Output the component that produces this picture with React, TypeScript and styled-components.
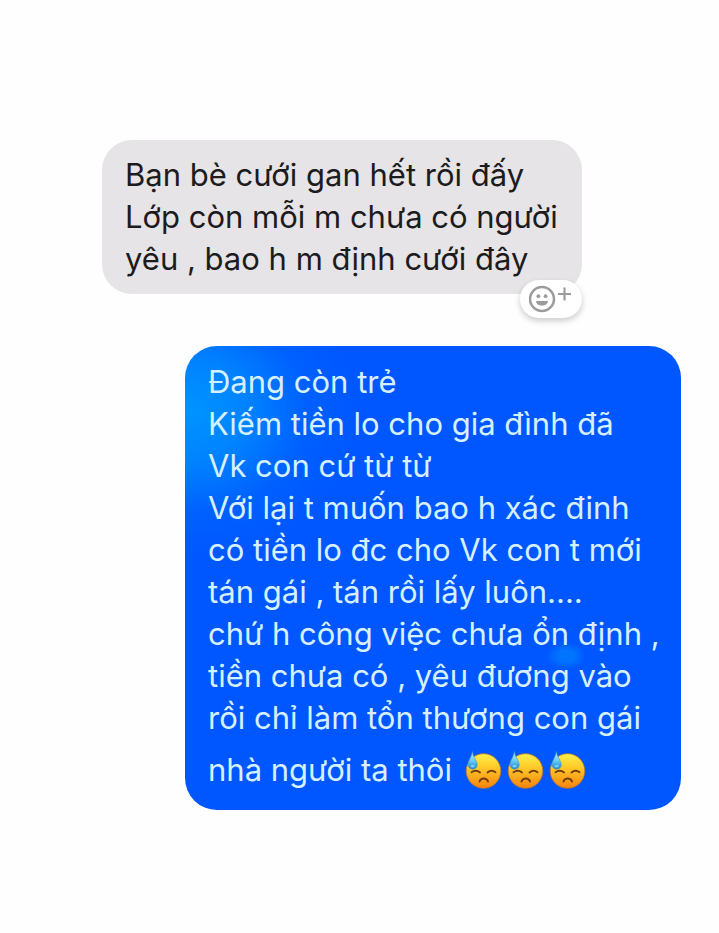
import React from "react";
import styled, { createGlobalStyle } from "styled-components";

const GlobalStyle = createGlobalStyle`
  * { box-sizing: border-box; }
  body {
    margin: 0;
    background: #fefefe;
    font-family: Inter, "Liberation Sans", sans-serif;
  }
`;

const Conversation = styled.main`
  display: flex;
  flex-direction: column;
  gap: 52px;
  min-height: 100vh;
  padding: 140px 38px 40px 102px;
`;

const Message = styled.article<{ $own?: boolean }>`
  position: relative;
  align-self: ${(p) => (p.$own ? "flex-end" : "flex-start")};
  min-width: ${(p) => (p.$own ? "496px" : "480px")};
  padding: ${(p) => (p.$own ? "15px 20px 19px 23px" : "14px 22px 14px 23px")};
  border-radius: ${(p) => (p.$own ? "32px" : "30px")};
  color: ${(p) => (p.$own ? "#d6f0ff" : "#1c1b1e")};
  background: ${(p) =>
    p.$own
      ? `radial-gradient(ellipse 20px 14px at 381px 310px, #0074ff 0 40%, transparent 100%),
         radial-gradient(ellipse 165px 145px at 6px 65px, #0094ff 0%, rgba(0, 138, 255, 0.85) 35%, rgba(0, 110, 255, 0.4) 70%, transparent 100%),
         #0057ff`
      : "#e6e4e6"};
  font-size: 31px;
  font-weight: 400;
  line-height: 42px;
`;

const Line = styled.p`
  margin: 0;
  white-space: nowrap;
`;

const EmojiLine = styled(Line)`
  display: flex;
  align-items: center;
  gap: 12px;
  margin-top: 10px;
`;

const EmojiRow = styled.span`
  display: flex;
  gap: 4px;
`;

const Emoji = styled.svg`
  display: block;
  width: 38px;
  height: 38px;
`;

const ReactionButton = styled.button`
  position: absolute;
  right: 0;
  bottom: -24px;
  display: flex;
  align-items: center;
  justify-content: center;
  width: 62px;
  height: 38px;
  padding: 0;
  border: 0;
  border-radius: 19px;
  background: #fff;
  box-shadow: 0 3px 6px rgba(0, 0, 0, 0.2);
`;

const incoming = [
  "Bạn bè cưới gan hết rồi đấy",
  "Lớp còn mỗi m chưa có người",
  "yêu , bao h m định cưới đây",
];

const outgoing = [
  "Đang còn trẻ",
  "Kiếm tiền lo cho gia đình đã",
  "Vk con cứ từ từ",
  "Với lại t muốn bao h xác đinh",
  "có tiền lo đc cho Vk con t mới",
  "tán gái , tán rồi lấy luôn....",
  "chứ h công việc chưa ổn định ,",
  "tiền chưa có , yêu đương vào",
  "rồi chỉ làm tổn thương con gái",
];

function SweatFace() {
  return (
    <Emoji viewBox="0 0 38 38" role="img" aria-label="😓">
      <defs>
        <linearGradient id="face" x1="0" y1="0" x2="0" y2="1">
          <stop offset="0" stopColor="#fff04a" />
          <stop offset="0.4" stopColor="#ffc928" />
          <stop offset="1" stopColor="#f5820f" />
        </linearGradient>
        <linearGradient id="drop" x1="0" y1="0" x2="0" y2="1">
          <stop offset="0" stopColor="#c9f3ff" />
          <stop offset="0.55" stopColor="#62c9f5" />
          <stop offset="1" stopColor="#1580cf" />
        </linearGradient>
      </defs>
      <circle cx="19.5" cy="20" r="17.3" fill="url(#face)" stroke="#b9762b" strokeWidth="0.8" />
      <g fill="none" stroke="#713b11" strokeWidth="1.9" strokeLinecap="round">
        <path d="M7.5 21.2q4.500-3 8.500.3" />
        <path d="M23.500 21.500q4-3.300 8-.3" />
        <path d="M15.5 30.5c1.5-4 7-4 8.5 0" />
      </g>
      <path d="M8.3 0.5C7.7 6 4 9.8 4 13.6c0 6.1 9.3 6.1 9.3 0C13.3 9.8 9 6.5 8.3 0.5z" fill="url(#drop)" stroke="#4199bd" strokeWidth="0.6" />
      <ellipse cx="8.6" cy="15.2" rx="2.2" ry="1.3" fill="#a7e8ff" opacity="0.65" />
    </Emoji>
  );
}

function AddReactionIcon() {
  return (
    <svg width="44" height="30" viewBox="0 0 44 30" fill="none" aria-hidden="true">
      <circle cx="13" cy="15" r="12" stroke="#9b9b9b" strokeWidth="2.5" />
      <circle cx="9.4" cy="12.2" r="1.9" fill="#9b9b9b" />
      <circle cx="16.6" cy="12.2" r="1.9" fill="#9b9b9b" />
      <path d="M7 17h12c-.2 6.2-11.8 6.2-12 0z" fill="#9b9b9b" />
      <path d="M29 10h13M35.5 3.5v13" stroke="#9b9b9b" strokeWidth="2.2" />
    </svg>
  );
}

export default function App() {
  return (
    <>
      <GlobalStyle />
      <Conversation lang="vi">
        <Message>
          {incoming.map((text) => (
            <Line key={text}>{text}</Line>
          ))}
          <ReactionButton type="button" aria-label="Thêm cảm xúc">
            <AddReactionIcon />
          </ReactionButton>
        </Message>
        <Message $own>
          {outgoing.map((text) => (
            <Line key={text}>{text}</Line>
          ))}
          <EmojiLine>
            nhà người ta thôi
            <EmojiRow>
              <SweatFace />
              <SweatFace />
              <SweatFace />
            </EmojiRow>
          </EmojiLine>
        </Message>
      </Conversation>
    </>
  );
}
